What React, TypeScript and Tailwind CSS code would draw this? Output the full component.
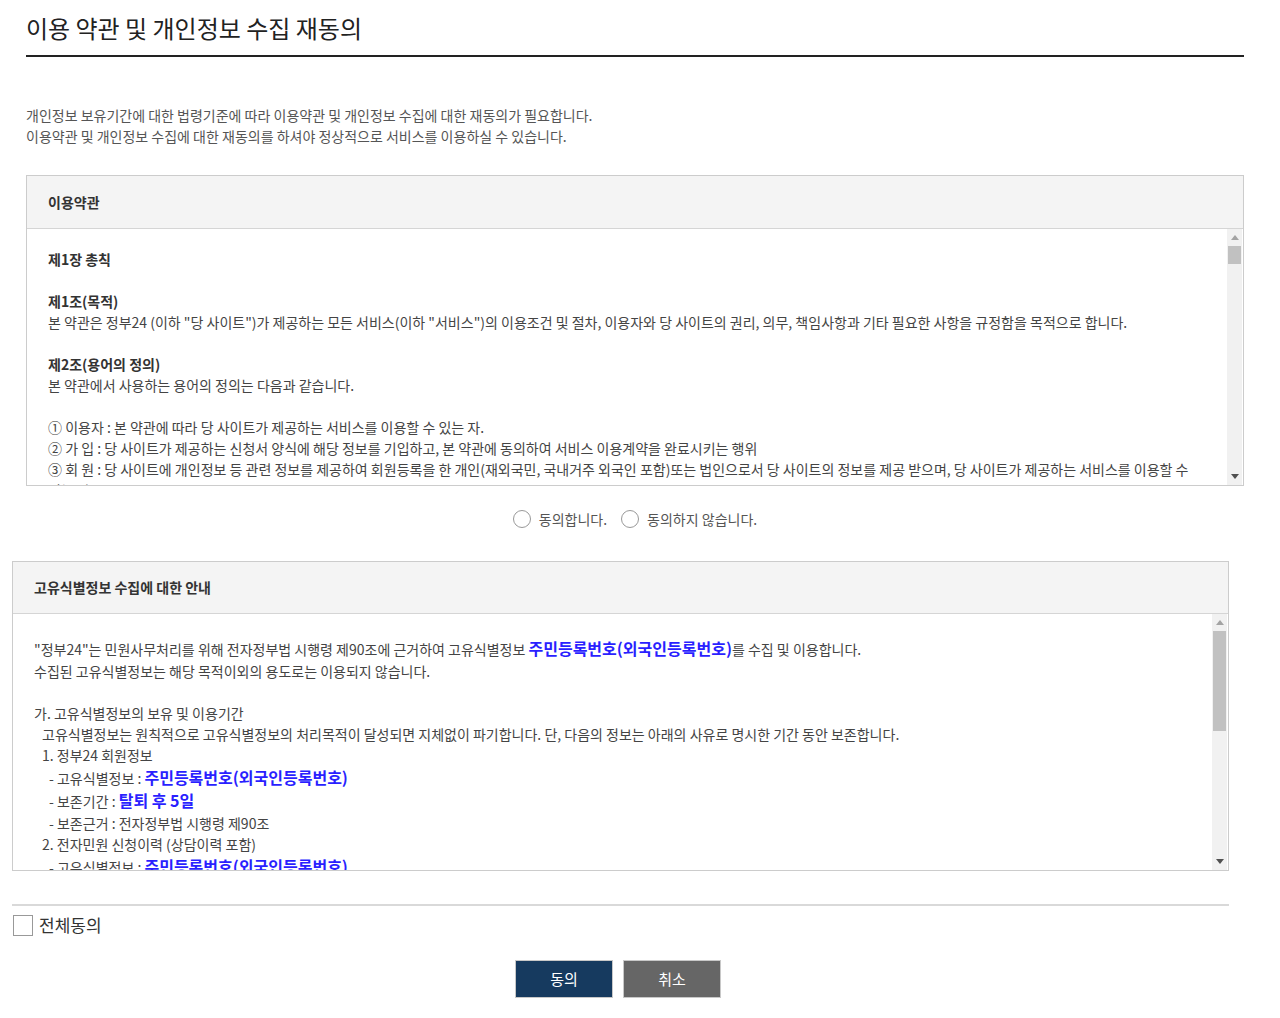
const font = { fontFamily: '"Noto Sans CJK KR", "Noto Sans", sans-serif' };

function ScrollTrack({ thumbHeight }: { thumbHeight: string }) {
  return (
    <div className="flex w-[15px] shrink-0 flex-col bg-[#f1f1f1]">
      <div className="flex h-[17px] items-center justify-center">
        <svg width="8" height="5" viewBox="0 0 8 5">
          <polygon points="0,5 8,5 4,0" fill="#a3a3a3" />
        </svg>
      </div>
      <div className="relative flex-1">
        <div className={`absolute left-[1px] right-[1px] top-0 bg-[#c1c1c1] ${thumbHeight}`} />
      </div>
      <div className="flex h-[17px] items-center justify-center">
        <svg width="8" height="5" viewBox="0 0 8 5">
          <polygon points="0,0 8,0 4,5" fill="#505050" />
        </svg>
      </div>
    </div>
  );
}

function Blue({ children }: { children: React.ReactNode }) {
  return <span className="text-[16px] font-bold text-[#2a1fff]">{children}</span>;
}

export default function App() {
  return (
    <div className="min-h-[1018px] w-[1280px] bg-white text-[14px] text-[#444]" style={font}>
      {/* 상단: 제목 + 이용약관 */}
      <div className="ml-[26px] w-[1218px]">
        <div className="border-b-2 border-[#222] pb-[11px] pt-[12px]">
          <h1 className="text-[24px] leading-[32px] text-[#222]">이용 약관 및 개인정보 수집 재동의</h1>
        </div>

        <div className="mt-[48px] leading-[21px] text-[#555]">
          <p>개인정보 보유기간에 대한 법령기준에 따라 이용약관 및 개인정보 수집에 대한 재동의가 필요합니다.</p>
          <p>이용약관 및 개인정보 수집에 대한 재동의를 하셔야 정상적으로 서비스를 이용하실 수 있습니다.</p>
        </div>

        <div className="mt-[28px] border border-[#cccccc]">
          <div className="flex h-[53px] items-center border-b border-[#d5d5d5] bg-[#f4f4f4] px-[21px]">
            <span className="font-bold text-[#333]">이용약관</span>
          </div>
          <div className="flex h-[256px] pr-[1px]">
            <div className="flex-1 overflow-hidden pl-[21px] pr-[30px] pt-[20px] leading-[21px]">
              <p className="font-bold text-[#333]">제1장 총칙</p>
              <p>&nbsp;</p>
              <p className="font-bold text-[#333]">제1조(목적)</p>
              <p>
                본 약관은 정부24 (이하 "당 사이트")가 제공하는 모든 서비스(이하 "서비스")의 이용조건 및 절차, 이용자와 당 사이트의 권리, 의무, 책임사항과 기타 필요한 사항을 규정함을 목적으로 합니다.
              </p>
              <p>&nbsp;</p>
              <p className="font-bold text-[#333]">제2조(용어의 정의)</p>
              <p>본 약관에서 사용하는 용어의 정의는 다음과 같습니다.</p>
              <p>&nbsp;</p>
              <p>① 이용자 : 본 약관에 따라 당 사이트가 제공하는 서비스를 이용할 수 있는 자.</p>
              <p>② 가 입 : 당 사이트가 제공하는 신청서 양식에 해당 정보를 기입하고, 본 약관에 동의하여 서비스 이용계약을 완료시키는 행위</p>
              <p>
                ③ 회 원 : 당 사이트에 개인정보 등 관련 정보를 제공하여 회원등록을 한 개인(재외국민, 국내거주 외국인 포함)또는 법인으로서 당 사이트의 정보를 제공 받으며, 당 사이트가 제공하는 서비스를 이용할 수 있는 자.
              </p>
            </div>
            <ScrollTrack thumbHeight="h-[18px]" />
          </div>
        </div>

        <div className="mt-[23px] flex h-[20px] items-center justify-center text-[#555]">
          <label className="flex items-center gap-[8px]">
            <span className="h-[18px] w-[18px] rounded-full border border-[#999] bg-white" />
            동의합니다.
          </label>
          <label className="ml-[14px] flex items-center gap-[8px]">
            <span className="h-[18px] w-[18px] rounded-full border border-[#999] bg-white" />
            동의하지 않습니다.
          </label>
        </div>
      </div>

      {/* 하단: 고유식별정보 + 전체동의 + 버튼 */}
      <div className="ml-[12px] mt-[32px] w-[1217px]">
        <div className="border border-[#cccccc]">
          <div className="flex h-[52px] items-center border-b border-[#d5d5d5] bg-[#f4f4f4] px-[21px]">
            <span className="font-bold text-[#333]">고유식별정보 수집에 대한 안내</span>
          </div>
          <div className="flex h-[256px] pr-[1px]">
            <div className="flex-1 overflow-hidden pl-[21px] pr-[20px] pt-[23px] leading-[21px]">
              <p className="leading-[23px]">
                "정부24"는 민원사무처리를 위해 전자정부법 시행령 제90조에 근거하여 고유식별정보 <Blue>주민등록번호(외국인등록번호)</Blue>를 수집 및 이용합니다.
              </p>
              <p>수집된 고유식별정보는 해당 목적이외의 용도로는 이용되지 않습니다.</p>
              <p>&nbsp;</p>
              <p>가. 고유식별정보의 보유 및 이용기간</p>
              <p className="pl-[8px]">
                고유식별정보는 원칙적으로 고유식별정보의 처리목적이 달성되면 지체없이 파기합니다. 단, 다음의 정보는 아래의 사유로 명시한 기간 동안 보존합니다.
              </p>
              <p className="pl-[8px]">1. 정부24 회원정보</p>
              <p className="pl-[15px] leading-[22px]">
                - 고유식별정보 : <Blue>주민등록번호(외국인등록번호)</Blue>
              </p>
              <p className="pl-[15px] leading-[23px]">
                - 보존기간 : <Blue>탈퇴 후 5일</Blue>
              </p>
              <p className="pl-[15px]">- 보존근거 : 전자정부법 시행령 제90조</p>
              <p className="pl-[8px]">2. 전자민원 신청이력 (상담이력 포함)</p>
              <p className="pl-[15px] leading-[22px]">
                - 고유식별정보 : <Blue>주민등록번호(외국인등록번호)</Blue>
              </p>
              <p className="pl-[15px] leading-[23px]">
                - 보존기간 : <Blue>5년</Blue>
              </p>
            </div>
            <ScrollTrack thumbHeight="h-[100px]" />
          </div>
        </div>

        <div className="mt-[33px] border-t-2 border-[#d9d9d9]" />

        <label className="mt-[7px] flex items-center gap-[6px]">
          <span className="ml-[1px] h-[21px] w-[20px] border border-[#999] bg-white" />
          <span className="text-[17px] leading-[24px] text-[#333]">전체동의</span>
        </label>

        <div className="mt-[23px] flex justify-center gap-[10px] pr-[5px]">
          <button className="h-[38px] w-[98px] border border-[#c8c8c8] bg-[#163a5f] text-[15px] text-white">
            동의
          </button>
          <button className="h-[38px] w-[98px] border border-[#c8c8c8] bg-[#666666] text-[15px] text-white">
            취소
          </button>
        </div>
      </div>
    </div>
  );
}
